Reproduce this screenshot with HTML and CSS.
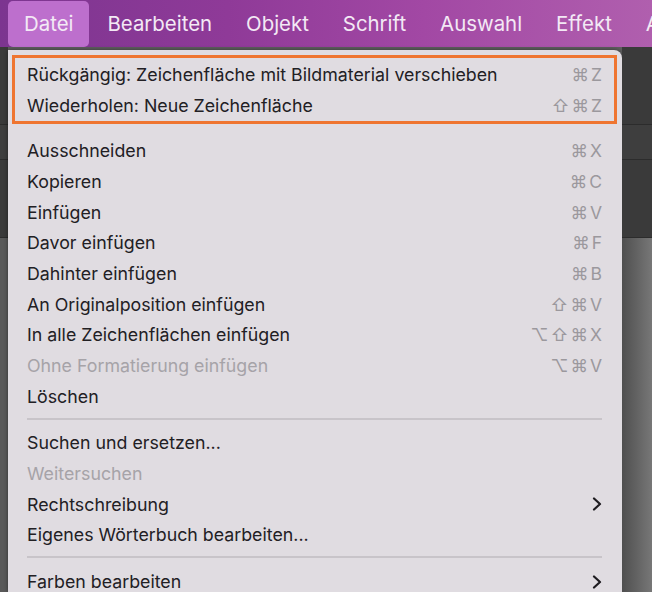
FILE: index.html
```html
<!DOCTYPE html>
<html lang="de">
<head>
    <meta charset="UTF-8">
    <title>Bearbeiten-Menü</title>
    <link rel="stylesheet" href="styles.css">
</head>
<body>
    <div class="menubar">
        <span class="menu-title active">Datei</span>
        <span class="menu-title">Bearbeiten</span>
        <span class="menu-title">Objekt</span>
        <span class="menu-title">Schrift</span>
        <span class="menu-title">Auswahl</span>
        <span class="menu-title">Effekt</span>
        <span class="menu-title">A</span>
    </div>

    <div class="workspace">
        <div class="side left-side">
            <div class="strip dark"></div>
            <div class="strip"></div>
            <div class="strip dark"></div>
            <div class="strip grey"></div>
        </div>

        <div class="dropdown">
            <div class="highlight-box">
                <div class="item"><span>Rückgängig: Zeichenfläche mit Bildmaterial verschieben</span><span class="keys">⌘Z</span></div>
                <div class="item"><span>Wiederholen: Neue Zeichenfläche</span><span class="keys">⇧⌘Z</span></div>
            </div>

            <div class="group">
                <div class="item"><span>Ausschneiden</span><span class="keys">⌘X</span></div>
                <div class="item"><span>Kopieren</span><span class="keys">⌘C</span></div>
                <div class="item"><span>Einfügen</span><span class="keys">⌘V</span></div>
                <div class="item"><span>Davor einfügen</span><span class="keys">⌘F</span></div>
                <div class="item"><span>Dahinter einfügen</span><span class="keys">⌘B</span></div>
                <div class="item"><span>An Originalposition einfügen</span><span class="keys">⇧⌘V</span></div>
                <div class="item"><span>In alle Zeichenflächen einfügen</span><span class="keys">⌥⇧⌘X</span></div>
                <div class="item disabled"><span>Ohne Formatierung einfügen</span><span class="keys">⌥⌘V</span></div>
                <div class="item"><span>Löschen</span></div>
            </div>

            <div class="separator"></div>

            <div class="group">
                <div class="item"><span>Suchen und ersetzen...</span></div>
                <div class="item disabled"><span>Weitersuchen</span></div>
                <div class="item"><span>Rechtschreibung</span>
                    <svg class="chevron" width="10" height="14" viewBox="0 0 10 14"><path d="M2 1.5 L8 7 L2 12.5" fill="none" stroke="#1e1c20" stroke-width="2.2" stroke-linecap="round" stroke-linejoin="round"/></svg>
                </div>
                <div class="item"><span>Eigenes Wörterbuch bearbeiten...</span></div>
            </div>

            <div class="separator"></div>

            <div class="group">
                <div class="item"><span>Farben bearbeiten</span>
                    <svg class="chevron" width="10" height="14" viewBox="0 0 10 14"><path d="M2 1.5 L8 7 L2 12.5" fill="none" stroke="#1e1c20" stroke-width="2.2" stroke-linecap="round" stroke-linejoin="round"/></svg>
                </div>
            </div>
        </div>

        <div class="side right-side">
            <div class="strip dark"></div>
            <div class="strip"></div>
            <div class="strip dark"></div>
            <div class="strip grey"></div>
        </div>
    </div>
</body>
</html>
```

FILE: styles.css
```css
body {
    margin: 0;
    width: 652px;
    height: 592px;
    overflow: hidden;
    font-family: Inter, "Liberation Sans", sans-serif;
    background-color: #5e5e5e;
}

.menubar {
    height: 47px;
    display: flex;
    align-items: center;
    padding-left: 8px;
    background: linear-gradient(90deg, #7c3590 0%, #8f3a98 35%, #a248a4 65%, #b05fae 100%);
    white-space: nowrap;
}

.menu-title {
    color: #f3e9f5;
    font-size: 20.4px;
    padding: 10px 16px 11px 16px;
    margin-right: 2px;
    border-radius: 5px;
}

.menu-title.active {
    background-color: #bd6fcd;
}

.workspace {
    display: flex;
    height: 545px;
}

.side {
    display: flex;
    flex-direction: column;
}

.left-side {
    width: 8px;
}

.right-side {
    flex: 1;
}

.strip {
    height: 34px;
    background-color: #3e3e3e;
    border-bottom: 1px solid #2c2c2c;
}

.strip.dark {
    height: 77px;
    background-color: #3a3a3a;
}

.strip.grey {
    flex: 1;
    background: linear-gradient(90deg, #4f4f4f, #777777);
    border: none;
}

.left-side .strip.grey {
    background: #595959;
}

.dropdown {
    width: 614px;
    flex-shrink: 0;
    margin-top: 3px;
    background-color: #e0dce1;
    border-radius: 0 8px 0 0;
    box-shadow: 0 0 4px rgba(0, 0, 0, 0.45);
    padding: 5px 5px 0 4px;
    box-sizing: border-box;
    color: #222024;
    font-size: 17.8px;
}

.highlight-box {
    border: 3px solid #ef7530;
    padding: 1px 12px;
    margin-bottom: 11px;
}

.group {
    padding: 0 15px;
}

.item {
    height: 30.7px;
    display: flex;
    align-items: center;
    justify-content: space-between;
    white-space: nowrap;
}

.item.disabled {
    color: #a6a3a8;
}

.keys {
    color: #9b989d;
    font-size: 17.5px;
    letter-spacing: 2px;
    margin-right: -2px;
}

.chevron {
    margin-right: 0;
}

.separator {
    height: 2px;
    background-color: #c8c4c9;
    margin: 6px 15px 8px 15px;
}
```
